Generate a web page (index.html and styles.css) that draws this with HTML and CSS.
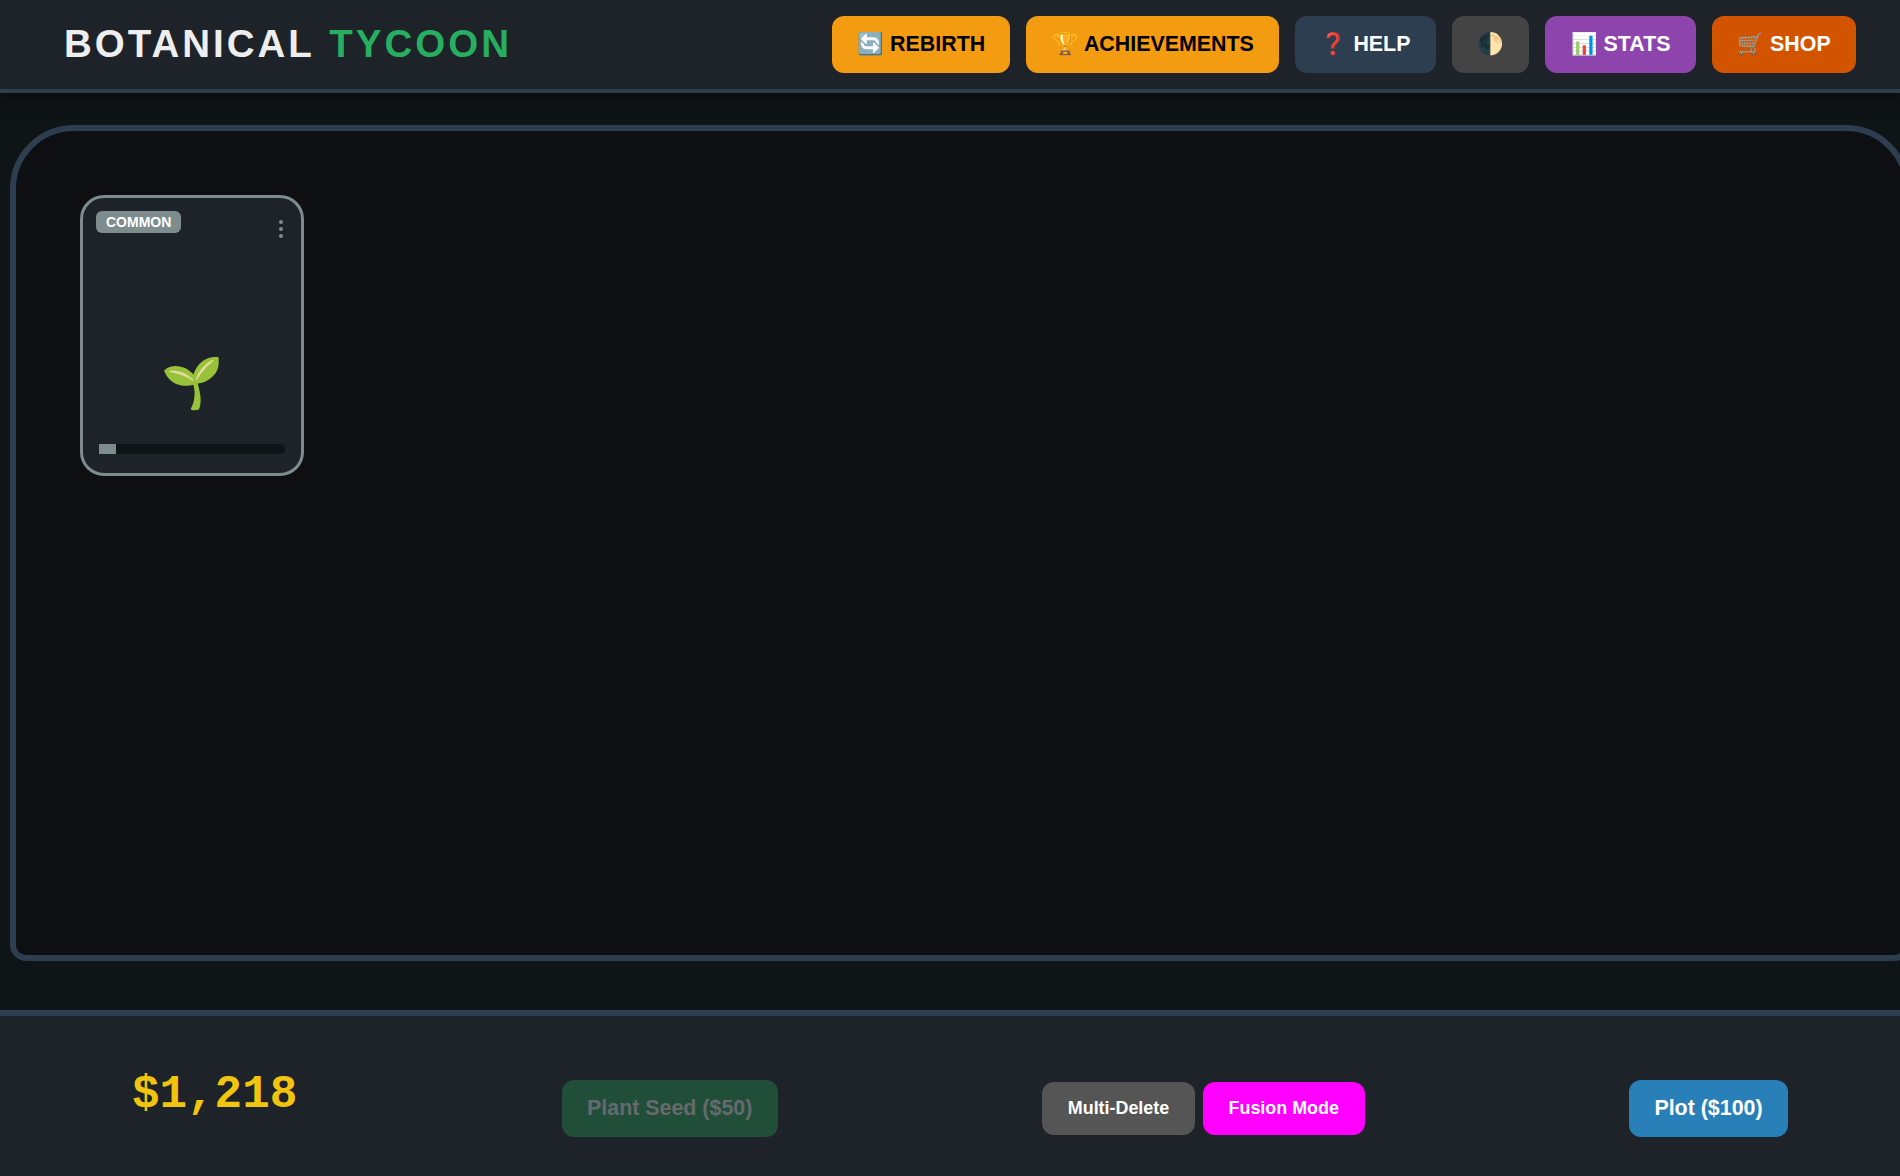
FILE: index.html
```html
<!DOCTYPE html>
<html lang="en"><head><meta charset="utf-8"><title>Botanical Tycoon</title><link rel="stylesheet" href="styles.css"></head>
<body>
<header class="top">
<h1 class="logo">BOTANICAL <span>TYCOON</span></h1>
<nav class="nav">
<button class="btn gold">🔄 REBIRTH</button>
<button class="btn gold">🏆 ACHIEVEMENTS</button>
<button class="btn slate">❓ HELP</button>
<button class="btn gray">🌓</button>
<button class="btn purple">📊 STATS</button>
<button class="btn orange">🛒 SHOP</button>
</nav>
</header>
<main class="stage">
<section class="garden">
<article class="plot">
<span class="rarity">COMMON</span>
<span class="dots"><i></i><i></i><i></i></span>
<div class="plant">🌱</div>
<div class="bar"><div class="fill"></div></div>
</article>
</section>
</main>
<footer class="bottom">
<div class="money">$1,218</div>
<button class="btn plantbtn">Plant Seed ($50)</button>
<div class="modes"><button class="btn small del">Multi-Delete</button><button class="btn small fusion">Fusion Mode</button></div>
<button class="btn plotbtn">Plot ($100)</button>
</footer>
</body></html>
```
FILE: styles.css
```css
* { box-sizing: border-box; }
body { margin: 0; height: 1176px; overflow: hidden; display: flex; flex-direction: column; background: #0f1416; font-family: "Liberation Sans", Arial, sans-serif; color: #eee; }
.top { height: 93px; flex: none; display: flex; align-items: center; justify-content: space-between; padding: 0 44px 0 64px; background: #1e2229; border-bottom: 4px solid #2c3e50; box-shadow: 0 4px 15px rgba(0,0,0,.5); }
.logo { margin: 0 0 2px; font-size: 38.5px; letter-spacing: 3px; word-spacing: 1.5px; }
.logo span { color: #27ae60; }
.nav { display: flex; gap: 16px; }
.btn { border: 0; border-radius: 12px; height: 57px; padding: 0 25.4px; font: bold 21.4px "Liberation Sans", Arial, sans-serif; color: #fff; white-space: nowrap; }
.nav .btn { padding: 0 25.3px 1px; }
.gold { background: #f39c12; color: #000; }
.slate { background: #2c3e50; }
.gray { background: #444; }
.purple { background: #8e44ad; }
.orange { background: #d35400; }
.stage { flex: 1; padding: 32px 0 0 10px; }
.garden { width: 1900px; height: 836px; padding: 64px; border: 6px solid #2c3e50; border-radius: 64px 64px 16px 16px; background: #0d0f12; }
.plot { position: relative; width: 224px; height: 281px; border: 3px solid #7f8c8d; border-radius: 24px; background: #1e2229; }
.rarity { position: absolute; left: 13px; top: 13px; height: 22px; padding: 0 10px; line-height: 22px; border-radius: 6px; background: #7f8c8d; color: #fff; font-size: 14px; font-weight: bold; }
.dots { position: absolute; right: 18px; top: 21.5px; display: grid; gap: 3.3px; }
.dots i { width: 4px; height: 4px; border-radius: 50%; background: #888; }
.plant { padding-top: 150px; text-align: center; font-size: 50px; line-height: 70px; }
.bar { position: absolute; left: 16px; right: 16px; bottom: 19px; height: 10px; border-radius: 0 5px 5px 0; background: #0f1416; }
.fill { width: 17px; height: 100%; background: #7f8c8d; }
.bottom { flex: none; height: 166px; display: flex; justify-content: space-between; padding: 64px 112px 0 132px; background: #1e2229; border-top: 6px solid #2c3e50; }
.money { margin-top: -11px; font: bold 45.9px "Liberation Mono", monospace; color: #f1c40f; }
.plantbtn { background: #214e38; color: #666a6d; }
.modes { display: flex; gap: 8px; padding-top: 2px; }
.small { font-size: 17.9px; height: 53px; padding: 0 25.7px; }
.del { background: #555; }
.fusion { background: #f0f; }
.plotbtn { background: #2980b9; }
```
